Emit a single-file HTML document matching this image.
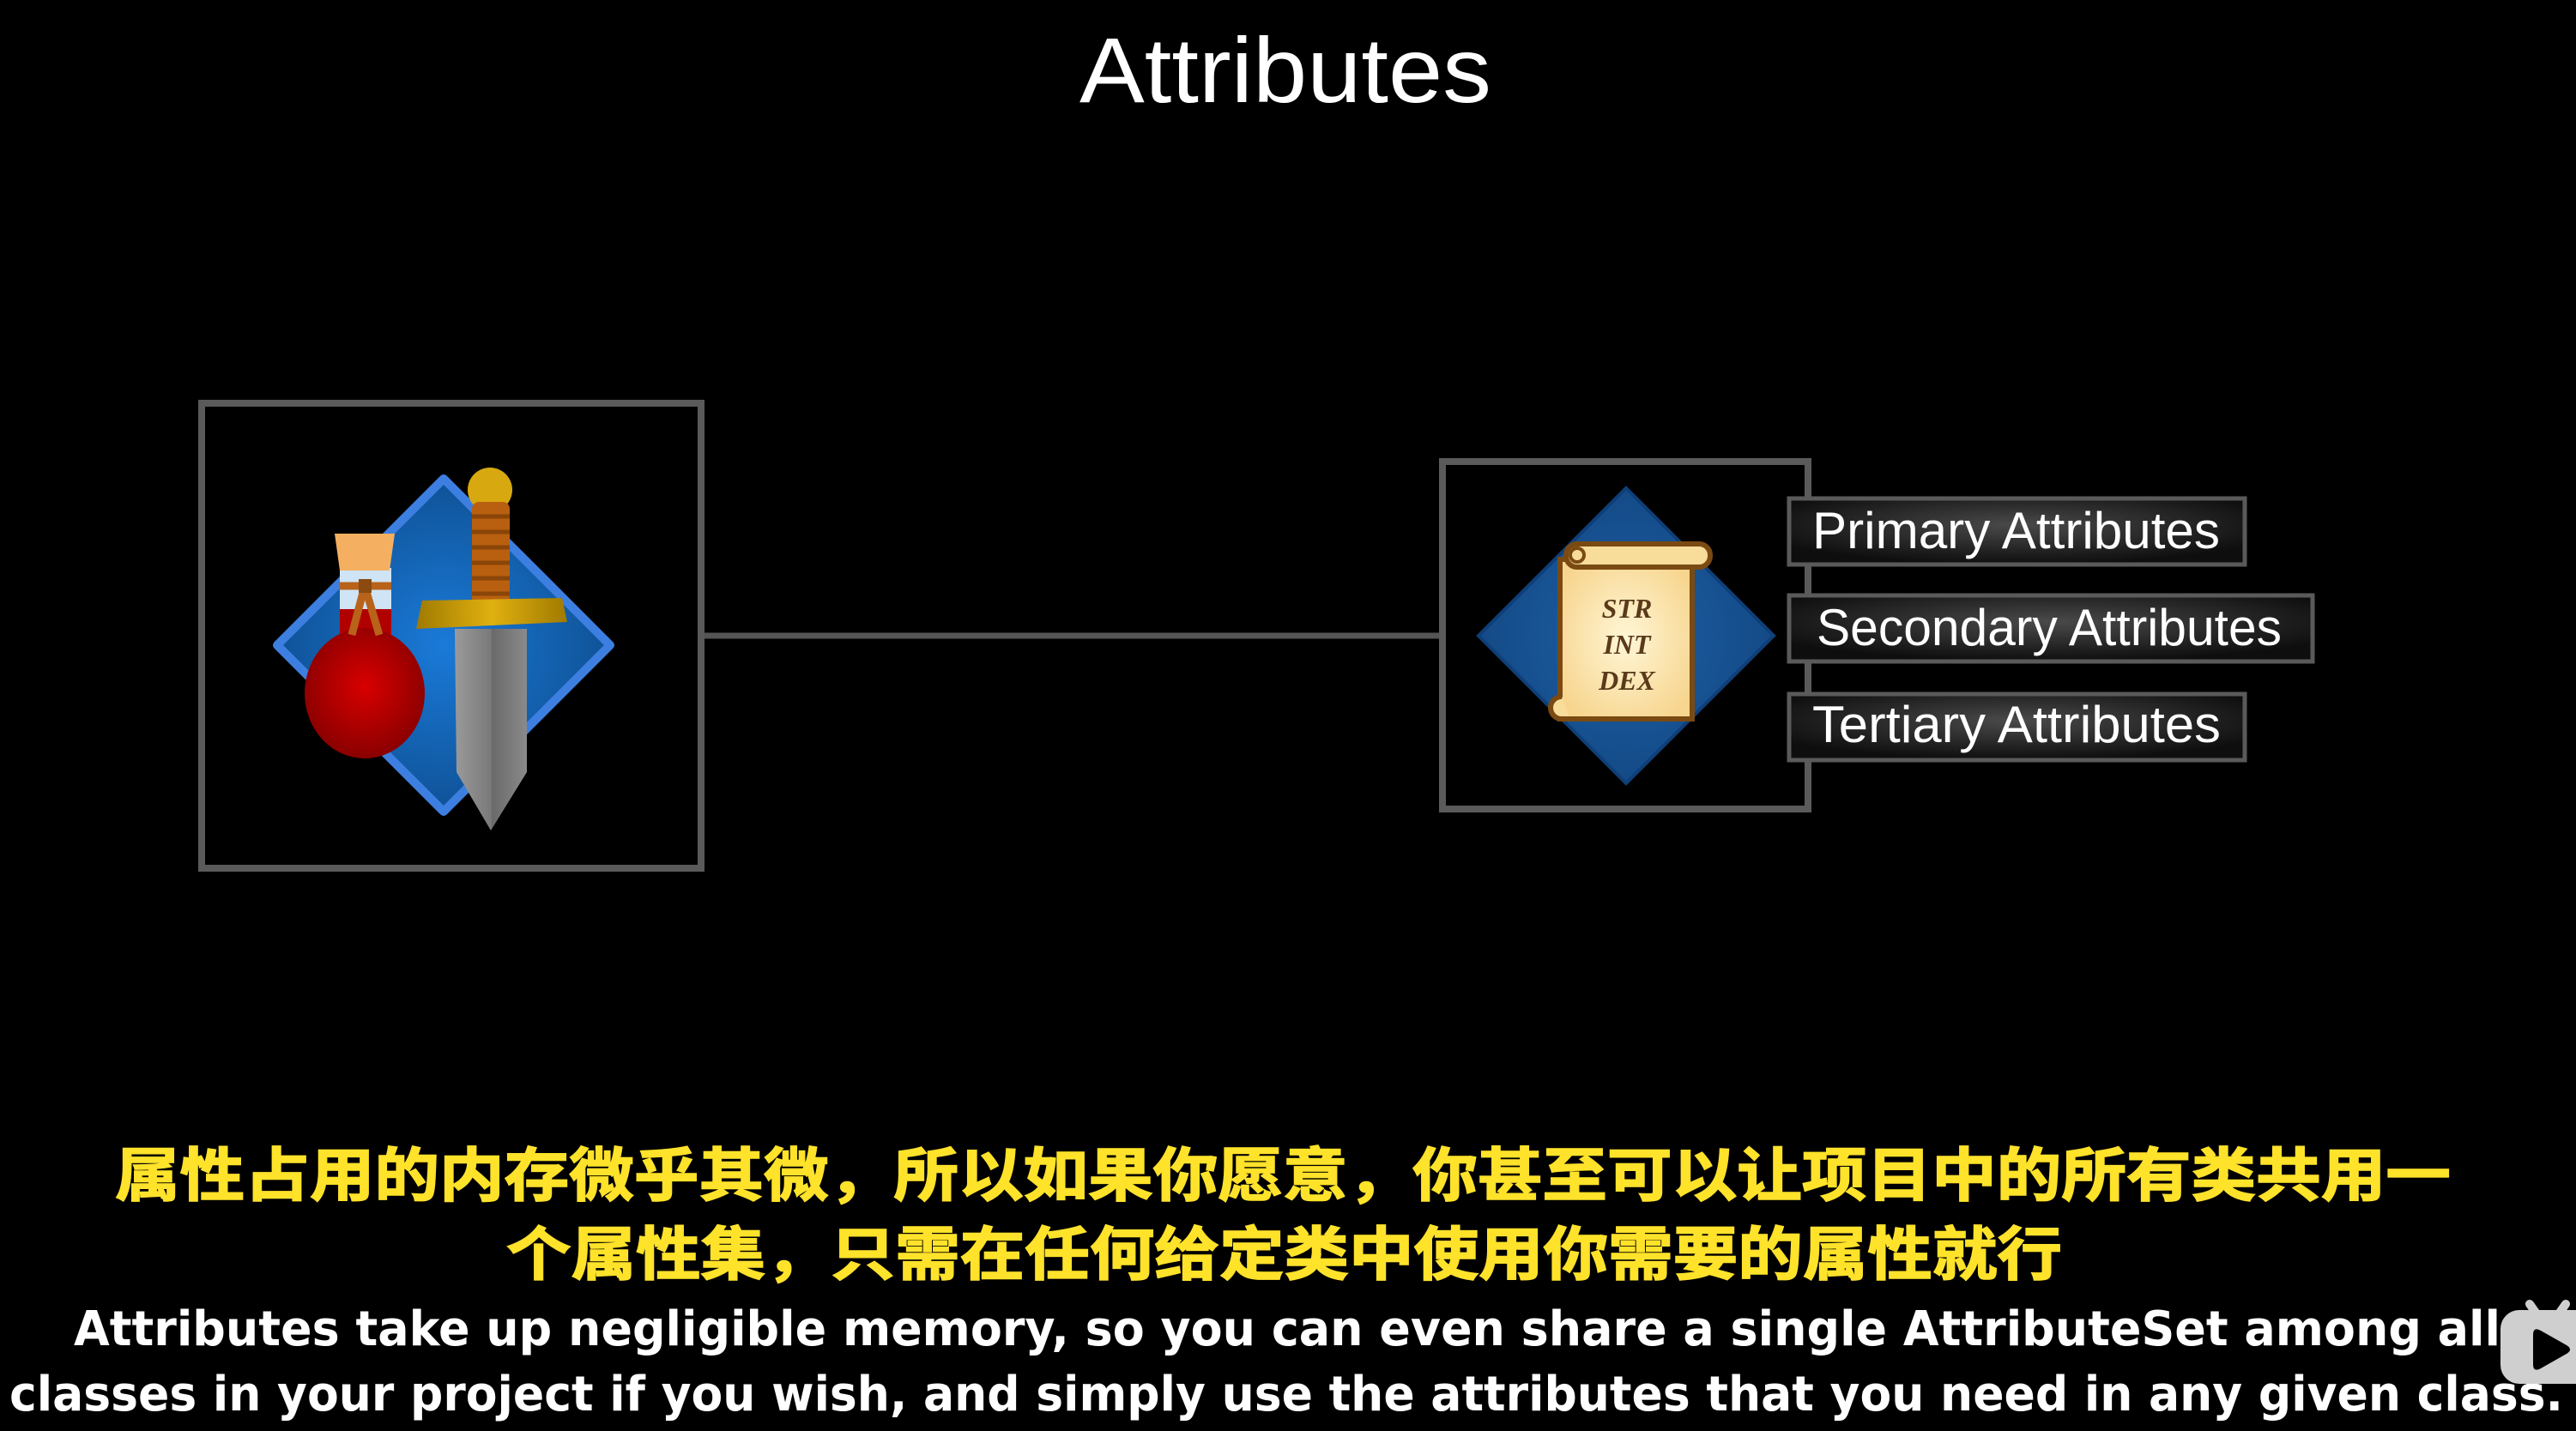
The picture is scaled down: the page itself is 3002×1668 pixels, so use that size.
<!DOCTYPE html>
<html><head><meta charset="utf-8"><style>
html,body{margin:0;padding:0;background:#000;}
svg{display:block;}
</style></head><body>
<svg width="3002" height="1668" viewBox="0 0 3002 1668" xmlns="http://www.w3.org/2000/svg">
<defs>
<radialGradient id="bl" cx="50%" cy="50%" r="60%"><stop offset="0" stop-color="#1a7ad8"/><stop offset="1" stop-color="#0d4a8a"/></radialGradient>
<radialGradient id="bl2" cx="50%" cy="50%" r="60%"><stop offset="0" stop-color="#1d5fa6"/><stop offset="1" stop-color="#124680"/></radialGradient>
<radialGradient id="red" cx="50%" cy="45%" r="55%"><stop offset="0" stop-color="#d80000"/><stop offset="1" stop-color="#8a0000"/></radialGradient>
<linearGradient id="blade" x1="0" x2="1"><stop offset="0" stop-color="#9a9a9a"/><stop offset="0.5" stop-color="#7a7a7a"/><stop offset="0.52" stop-color="#6a6a6a"/><stop offset="1" stop-color="#8a8a8a"/></linearGradient>
<linearGradient id="gold" x1="0" x2="1"><stop offset="0" stop-color="#a07a00"/><stop offset="0.5" stop-color="#e0b010"/><stop offset="1" stop-color="#a07a00"/></linearGradient>
<radialGradient id="paper" cx="50%" cy="50%" r="60%"><stop offset="0" stop-color="#fff6d6"/><stop offset="1" stop-color="#f7d58e"/></radialGradient>
<radialGradient id="lab" cx="50%" cy="40%" r="60%"><stop offset="0" stop-color="#4a4a4a"/><stop offset="1" stop-color="#0e0e0e"/></radialGradient>
</defs>

<text x="1498" y="119" text-anchor="middle" font-family="Liberation Sans, sans-serif" font-size="108" fill="#fff" textLength="480" lengthAdjust="spacingAndGlyphs">Attributes</text>

<line x1="818" y1="741" x2="1681" y2="741" stroke="#555" stroke-width="7"/>

<rect x="235" y="470" width="582" height="542" fill="#000" stroke="#5a5a5a" stroke-width="8"/>
<polygon points="517,558 711,752 517,946 323,752" fill="url(#bl)" stroke="#3d7fe0" stroke-width="10" stroke-linejoin="round"/>
<!-- potion -->
<rect x="396" y="662" width="60" height="50" fill="#cfe4f5"/>
<path d="M396,710 h60 v40 q0,20 -30,20 q-30,0 -30,-20 z" fill="#b00000"/>
<ellipse cx="425" cy="808" rx="70" ry="76" fill="url(#red)"/>
<polygon points="390,622 460,622 454,665 396,665" fill="#f4b060"/>
<path d="M395,683 L456,683 M425,683 L410,740 M425,683 L442,740" stroke="#b8621a" stroke-width="9" fill="none"/>
<rect x="418" y="675" width="15" height="16" fill="#8a4a10"/>
<!-- sword -->
<circle cx="571" cy="571" r="26" fill="#d8a810"/>
<rect x="550" y="585" width="44" height="120" rx="8" fill="#b8600f"/>
<path d="M550,602 h44 M550,620 h44 M550,638 h44 M550,656 h44 M550,674 h44 M550,692 h44" stroke="#8a4508" stroke-width="5"/>
<polygon points="492,700 655,697 661,725 485,733" fill="url(#gold)"/>
<polygon points="530,733 614,733 614,900 572,968 532,900" fill="url(#blade)"/>

<rect x="1681" y="538" width="426" height="405" fill="#000" stroke="#5a5a5a" stroke-width="8"/>
<polygon points="1895,569 2067,741 1895,913 1723,741" fill="url(#bl2)" stroke="#0f3f78" stroke-width="4"/>
<rect x="1818" y="652" width="154" height="186" fill="url(#paper)" stroke="#7a4a12" stroke-width="6"/>
<rect x="1825" y="634" width="168" height="27" rx="13" fill="#f8dc9a" stroke="#7a4a12" stroke-width="6"/>
<circle cx="1838" cy="647" r="8" fill="none" stroke="#7a4a12" stroke-width="4"/>
<path d="M1820,812 a13,13 0 1 0 0,26 h10" fill="#f8dc9a" stroke="#7a4a12" stroke-width="6"/>
<g font-family="Liberation Serif, serif" font-style="italic" font-weight="bold" font-size="32" fill="#5a3a1a" text-anchor="middle">
<text x="1896" y="720">STR</text><text x="1896" y="762">INT</text><text x="1896" y="804">DEX</text></g>

<g stroke="#5a5a5a" stroke-width="5" fill="url(#lab)">
<rect x="2085" y="581" width="531" height="77"/>
<rect x="2085" y="694" width="610" height="77"/>
<rect x="2085" y="809" width="531" height="77"/>
</g>
<g font-family="Liberation Sans, sans-serif" font-size="60" fill="#fff">
<text x="2112" y="639" textLength="475" lengthAdjust="spacingAndGlyphs">Primary Attributes</text>
<text x="2117" y="752" textLength="542" lengthAdjust="spacingAndGlyphs">Secondary Attributes</text>
<text x="2112" y="865" textLength="476" lengthAdjust="spacingAndGlyphs">Tertiary Attributes</text>
</g>

<g font-family="Liberation Sans, 'Noto Sans CJK SC', sans-serif" font-weight="bold" font-size="68" fill="#ffe22a" stroke="#ffe22a" stroke-width="1.5">
<text x="134" y="1394" textLength="2722" lengthAdjust="spacingAndGlyphs">属性占用的内存微乎其微，所以如果你愿意，你甚至可以让项目中的所有类共用一</text>
<text x="590" y="1486" textLength="1813" lengthAdjust="spacingAndGlyphs">个属性集，只需在任何给定类中使用你需要的属性就行</text>
</g>
<g font-family="'DejaVu Sans', sans-serif" font-weight="bold" font-size="56" fill="#fff">
<text x="86" y="1568" textLength="2828" lengthAdjust="spacingAndGlyphs">Attributes take up negligible memory, so you can even share a single AttributeSet among all</text>
<text x="11" y="1644" textLength="2976" lengthAdjust="spacingAndGlyphs">classes in your project if you wish, and simply use the attributes that you need in any given class.</text>
</g>

<g fill="#cfcfcf">
<path d="M2948,1520 l14,20 M2990,1520 l-14,20" stroke="#cfcfcf" stroke-width="10" stroke-linecap="round"/>
<rect x="2914" y="1527" width="110" height="86" rx="22"/>
</g>
<path d="M2952,1556 q0,-10 9,-5 l30,17 q8,5 0,10 l-30,17 q-9,5 -9,-5 z" fill="#000"/>
</svg>
</body></html>
